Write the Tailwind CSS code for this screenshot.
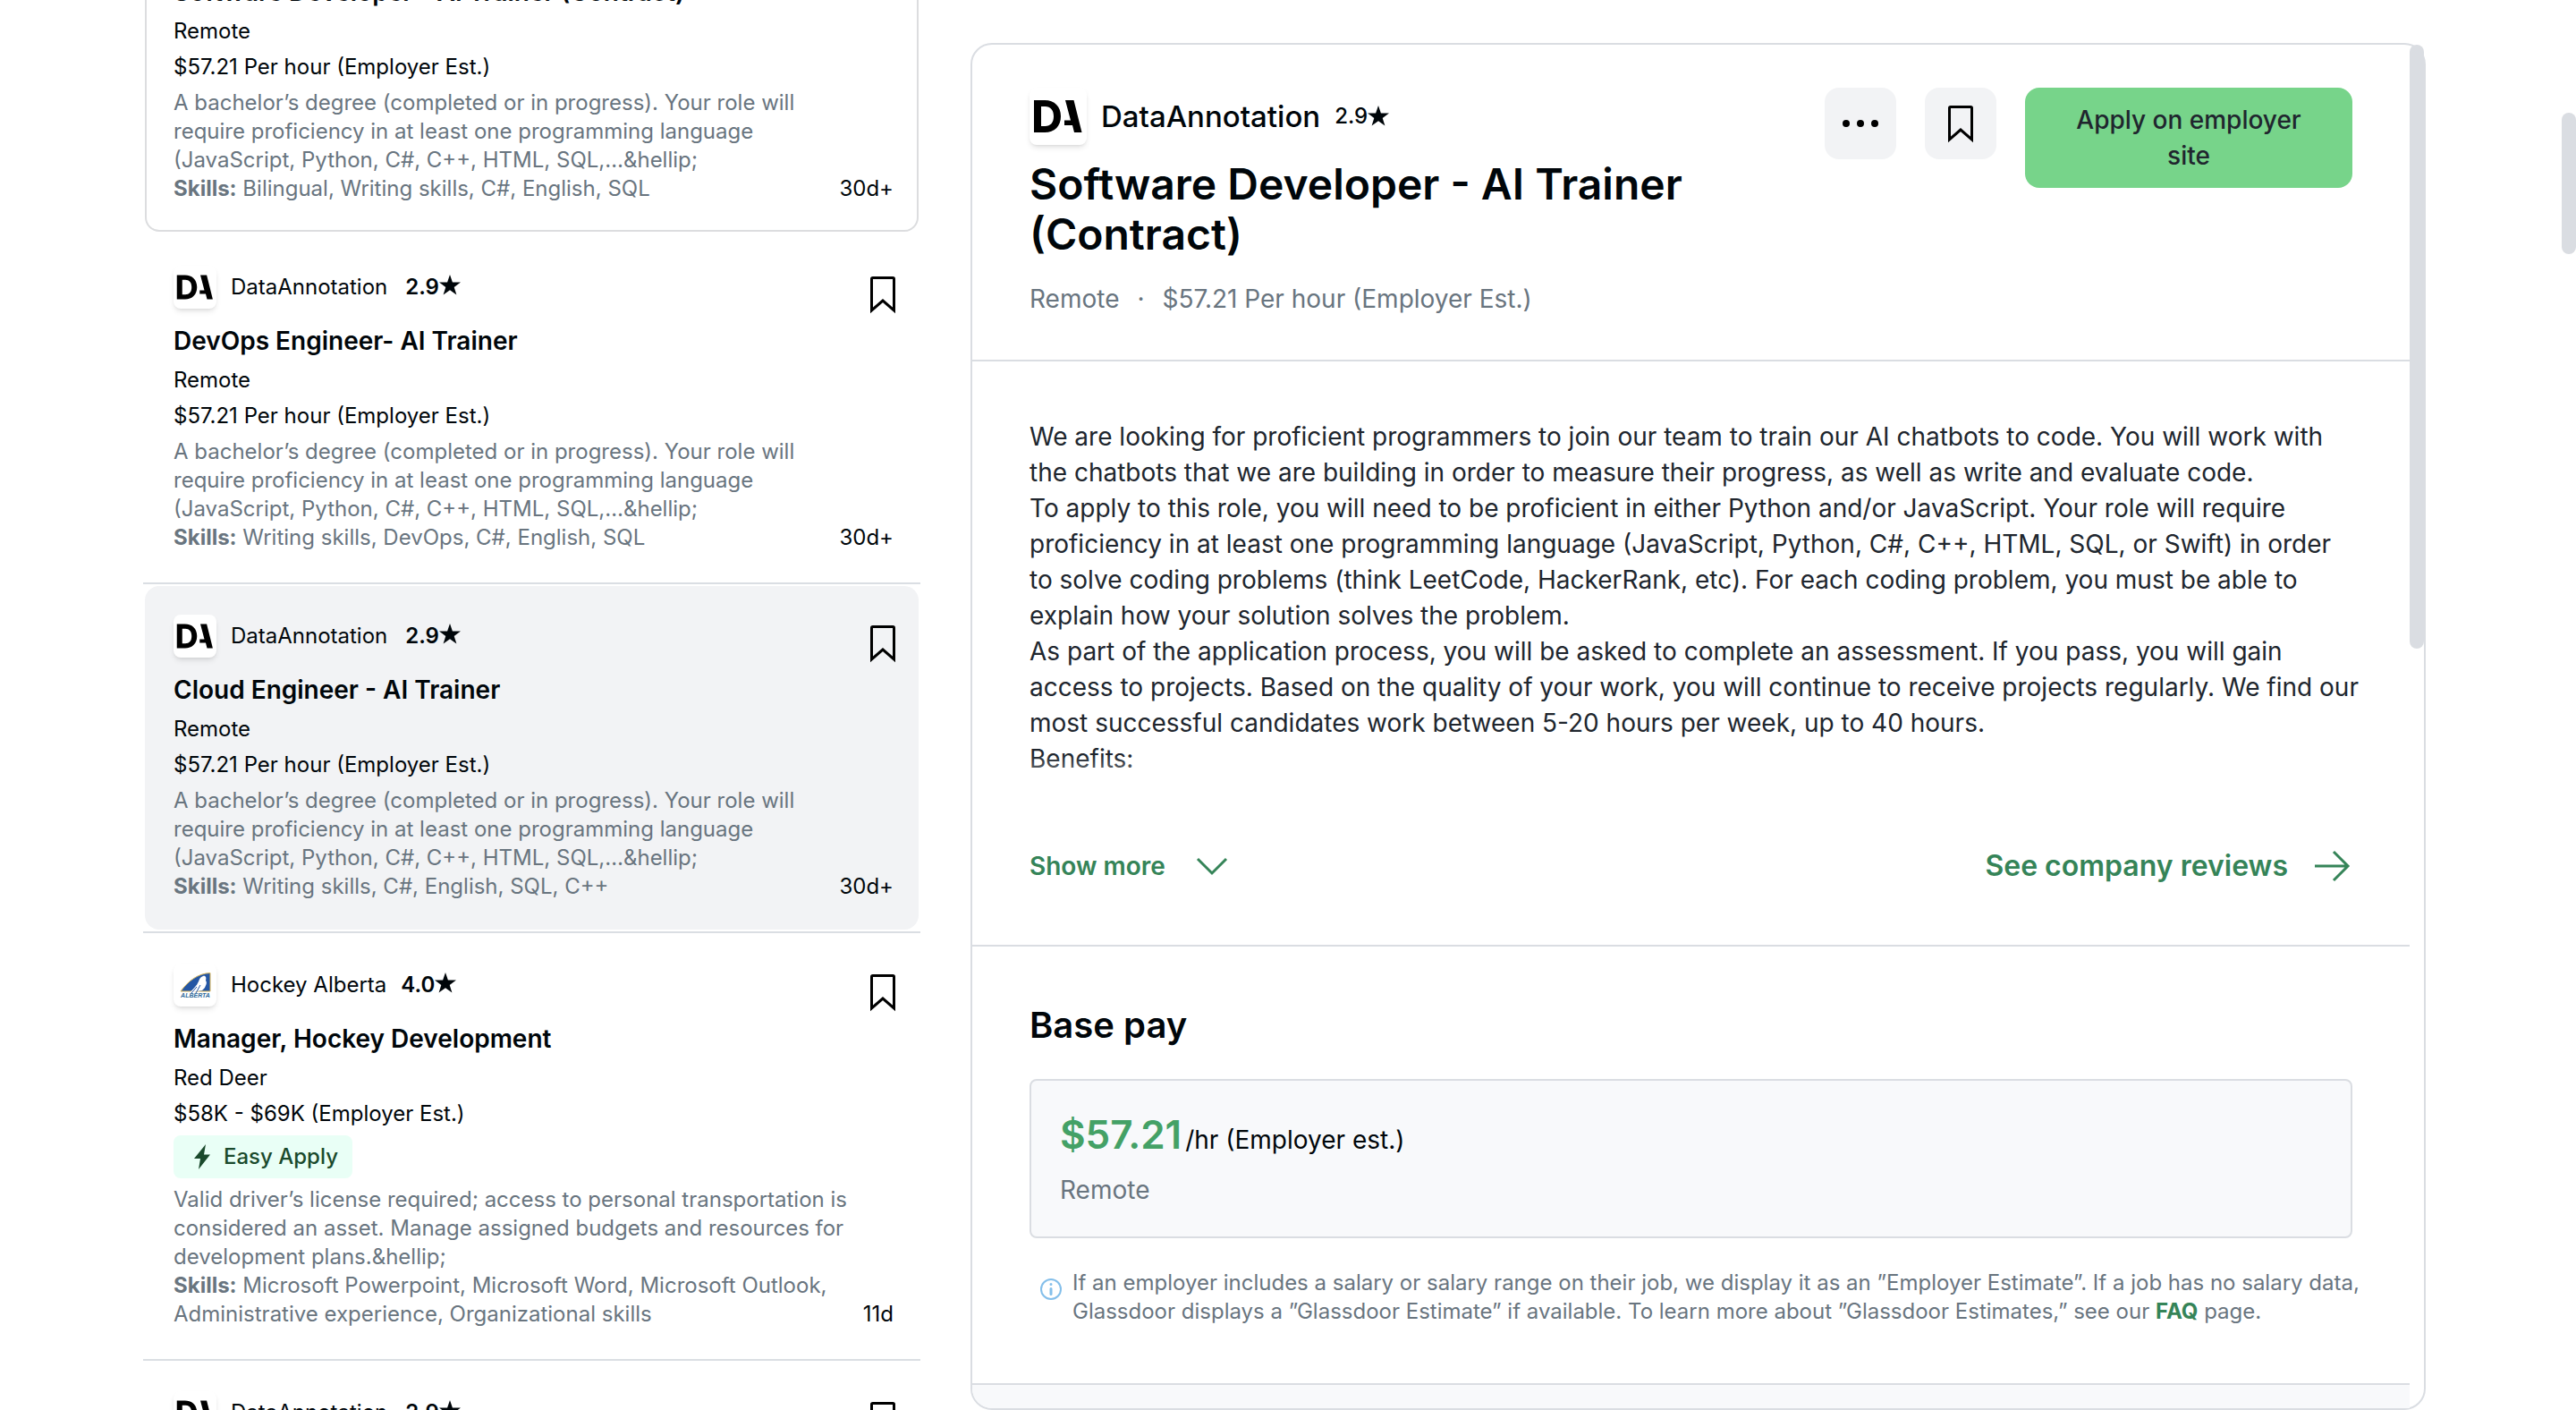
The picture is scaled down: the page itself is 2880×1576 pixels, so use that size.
<!DOCTYPE html>
<html lang="en">
<head>
<meta charset="utf-8">
<title>Software Developer - AI Trainer (Contract) | Jobs</title>
<script src="https://cdn.jsdelivr.net/npm/@tailwindcss/browser@4"></script>
</head>
<body class="h-screen overflow-hidden bg-white font-['Inter','Liberation_Sans',sans-serif] text-[24px] leading-8 text-[#00060a]">

<svg class="hidden" aria-hidden="true">
  <symbol id="da" viewBox="0 0 64 64">
    <path fill="#000" fill-rule="evenodd" d="M5 14h12c11 0 18 7 18 18s-7 18-18 18H5zM13 21v22h4.500c6 0 9.500-4 9.500-11s-3.500-11-9.500-11z"/>
    <path fill="#000" d="M40 14h9.500l9 36H50l-2-8h-9v-5.500h7z"/>
  </symbol>
  <symbol id="hockey" viewBox="0 0 48 48">
    <path fill="#2456a4" stroke="#d9b65c" stroke-width="1" d="M8 31C16 20 27 11 41 10.500V31z"/>
    <path fill="#fff" d="M33 14c3-1 4 2 3 5 2 3 0 5-1 8l-3 3-6 1-8 2c4-5 8-8 10-13 1-3 2-5 5-6z"/>
    <path fill="none" stroke="#2456a4" stroke-width="1" d="M20 33l6-7M25 33l5-9"/>
    <text x="24.500" y="37.500" text-anchor="middle" font-family="Liberation Sans" font-weight="700" font-style="italic" font-size="7" fill="#2f6a9a">ALBERTA</text>
  </symbol>
  <symbol id="bookmark" viewBox="0 0 24 24">
    <path fill="none" stroke="#000" stroke-width="1.500" d="M5.750 3.400Q5.750 2.750 6.400 2.750H17.600Q18.250 2.750 18.250 3.400V21L12 15.500L5.750 21z"/>
  </symbol>
  <symbol id="star" viewBox="0 0 24 24">
    <path fill="#00060a" d="M12 0l2.900 8.600H24l-7.300 5.300L19.400 22.500 12 17.200l-7.400 5.300 2.700-8.600L0 8.600h9.100z"/>
  </symbol>
</svg>

<div class="grid h-full grid-cols-[869px_1fr] gap-14 pr-[168px] pl-40">

  <section aria-label="Job results" class="overflow-hidden">
    <ul class="-mt-[125px]">
      <li>
        <article class="mx-0.5 rounded-2xl border-2 border-[#dcdddf] pt-[30px] pr-3.5 pb-[30px] pl-[30px]">
          <div class="flex h-12 items-start">
            <div class="flex flex-1 items-center gap-4">
              <svg class="size-12 rounded-lg bg-white shadow-md"><use href="#da"/></svg>
              <span>DataAnnotation</span>
              <span class="ml-1 flex items-center font-semibold">2.9<svg class="mb-1 size-6"><use href="#star"/></svg></span>
            </div>
            <button aria-label="Save job" class="mt-2"><svg class="size-12"><use href="#bookmark"/></svg></button>
          </div>
          <h3 class="mt-4 text-[28px] leading-10 font-semibold"><a href="#">Software Developer - AI Trainer (Contract)</a></h3>
          <p class="mt-2">Remote</p>
          <p class="mt-2">$57.21 Per hour (Employer Est.)</p>
          <div class="mt-2 flex items-end justify-between pr-3">
            <div class="w-[736px] text-[#69757f]">
              <p>A bachelor’s degree (completed or in progress). Your role will require proficiency in at least one programming language (JavaScript, Python, C#, C++, HTML, SQL,…&amp;hellip;</p>
              <p><b>Skills:</b> Bilingual, Writing skills, C#, English, SQL</p>
            </div>
            <span>30d+</span>
          </div>
        </article>
      </li>

      <li class="mt-1.5">
        <article class="mx-0.5 mb-0.5 rounded-2xl py-8 pr-4 pl-8">
          <div class="flex h-12 items-start">
            <div class="flex flex-1 items-center gap-4">
              <svg class="size-12 rounded-lg bg-white shadow-md"><use href="#da"/></svg>
              <span>DataAnnotation</span>
              <span class="ml-1 flex items-center font-semibold">2.9<svg class="mb-1 size-6"><use href="#star"/></svg></span>
            </div>
            <button aria-label="Save job" class="mt-2"><svg class="size-12"><use href="#bookmark"/></svg></button>
          </div>
          <h3 class="mt-4 text-[28px] leading-10 font-semibold"><a href="#">DevOps Engineer- AI Trainer</a></h3>
          <p class="mt-2">Remote</p>
          <p class="mt-2">$57.21 Per hour (Employer Est.)</p>
          <div class="mt-2 flex items-end justify-between pr-3">
            <div class="w-[736px] text-[#69757f]">
              <p>A bachelor’s degree (completed or in progress). Your role will require proficiency in at least one programming language (JavaScript, Python, C#, C++, HTML, SQL,…&amp;hellip;</p>
              <p><b>Skills:</b> Writing skills, DevOps, C#, English, SQL</p>
            </div>
            <span>30d+</span>
          </div>
        </article>
      </li>

      <li class="border-t-2 border-[#dadee3] py-0.5">
        <article class="mx-0.5 rounded-2xl bg-[#f2f3f5] py-8 pr-4 pl-8">
          <div class="flex h-12 items-start">
            <div class="flex flex-1 items-center gap-4">
              <svg class="size-12 rounded-lg bg-white shadow-md"><use href="#da"/></svg>
              <span>DataAnnotation</span>
              <span class="ml-1 flex items-center font-semibold">2.9<svg class="mb-1 size-6"><use href="#star"/></svg></span>
            </div>
            <button aria-label="Save job" class="mt-2"><svg class="size-12"><use href="#bookmark"/></svg></button>
          </div>
          <h3 class="mt-4 text-[28px] leading-10 font-semibold"><a href="#">Cloud Engineer - AI Trainer</a></h3>
          <p class="mt-2">Remote</p>
          <p class="mt-2">$57.21 Per hour (Employer Est.)</p>
          <div class="mt-2 flex items-end justify-between pr-3">
            <div class="w-[736px] text-[#69757f]">
              <p>A bachelor’s degree (completed or in progress). Your role will require proficiency in at least one programming language (JavaScript, Python, C#, C++, HTML, SQL,…&amp;hellip;</p>
              <p><b>Skills:</b> Writing skills, C#, English, SQL, C++</p>
            </div>
            <span>30d+</span>
          </div>
        </article>
      </li>

      <li class="border-t-2 border-[#dadee3] py-0.5">
        <article class="mx-0.5 rounded-2xl py-8 pr-4 pl-8">
          <div class="flex h-12 items-start">
            <div class="flex flex-1 items-center gap-4">
              <svg class="size-12 rounded-lg bg-white shadow-md"><use href="#hockey"/></svg>
              <span>Hockey Alberta</span>
              <span class="flex items-center font-semibold">4.0<svg class="mb-1 size-6"><use href="#star"/></svg></span>
            </div>
            <button aria-label="Save job" class="mt-2"><svg class="size-12"><use href="#bookmark"/></svg></button>
          </div>
          <h3 class="mt-4 text-[28px] leading-10 font-semibold"><a href="#">Manager, Hockey Development</a></h3>
          <p class="mt-2">Red Deer</p>
          <p class="mt-2">$58K - $69K (Employer Est.)</p>
          <div class="mt-2 flex h-12 w-fit items-center gap-2 rounded-lg bg-[#e9fff6] px-4 font-medium text-[#1a4a2c]">
            <svg class="size-8" viewBox="0 0 32 32"><path fill="#1a4a2c" d="M20 2L7 18h7l-2 12L25 13.500h-7z"/></svg>
            Easy Apply
          </div>
          <div class="mt-2 flex items-end justify-between pr-3">
            <div class="w-[760px] text-[#69757f]">
              <p>Valid driver’s license required; access to personal transportation is considered an asset. Manage assigned budgets and resources for development plans.&amp;hellip;</p>
              <p><b>Skills:</b> Microsoft Powerpoint, Microsoft Word, Microsoft Outlook, Administrative experience, Organizational skills</p>
            </div>
            <span>11d</span>
          </div>
        </article>
      </li>

      <li class="border-t-2 border-[#dadee3] py-0.5">
        <article class="mx-0.5 rounded-2xl py-8 pr-4 pl-8">
          <div class="flex h-12 items-start">
            <div class="flex flex-1 items-center gap-4">
              <svg class="size-12 rounded-lg bg-white shadow-md"><use href="#da"/></svg>
              <span>DataAnnotation</span>
              <span class="ml-1 flex items-center font-semibold">2.9<svg class="mb-1 size-6"><use href="#star"/></svg></span>
            </div>
            <button aria-label="Save job" class="mt-2"><svg class="size-12"><use href="#bookmark"/></svg></button>
          </div>
        </article>
      </li>
    </ul>
  </section>

  <main class="min-w-0 pt-12">
    <div class="relative flex h-full flex-col rounded-3xl border-2 border-[#dadde2] pr-4">
      <div class="absolute top-0 right-0 h-[675px] w-4 rounded-full bg-[#dadde2]"></div>

      <header class="flex items-start gap-8 border-b-2 border-[#dadde2] px-16 py-12">
        <div class="flex-1">
          <div class="flex items-center gap-4">
            <svg class="size-16 rounded-lg bg-white shadow-md"><use href="#da"/></svg>
            <span class="text-[33px] font-medium">DataAnnotation</span>
            <span class="flex items-center font-medium">2.9<svg class="size-6"><use href="#star"/></svg></span>
          </div>
          <h1 class="mt-4 text-[48px] leading-14 font-semibold">Software Developer - AI Trainer (Contract)</h1>
          <p class="mt-6 flex gap-5 text-[28px] leading-10 text-[#69757f]"><span>Remote</span><span>·</span><span>$57.21 Per hour (Employer Est.)</span></p>
        </div>
        <button aria-label="More options" class="flex size-20 items-center justify-center rounded-2xl bg-[#f2f3f5]">
          <svg class="size-12" viewBox="0 0 48 48"><circle cx="8" cy="24" r="4"/><circle cx="24" cy="24" r="4"/><circle cx="40" cy="24" r="4"/></svg>
        </button>
        <button aria-label="Save job" class="flex size-20 items-center justify-center rounded-2xl bg-[#f2f3f5]">
          <svg class="size-12"><use href="#bookmark"/></svg>
        </button>
        <button class="h-28 w-[366px] rounded-2xl bg-[#77d48a] px-12 text-[28px] leading-10 font-medium text-[#20262e]">Apply on employer site</button>
      </header>

      <section class="border-b-2 border-[#dadde2] p-16">
        <div class="relative text-[28px] leading-10 text-[#20262e]">
          <p>We are looking for proficient programmers to join our team to train our AI chatbots to code. You will work with the chatbots that we are building in order to measure their progress, as well as write and evaluate code.</p>
          <p>To apply to this role, you will need to be proficient in either Python and/or JavaScript. Your role will require proficiency in at least one programming language (JavaScript, Python, C#, C++, HTML, SQL, or Swift) in order to solve coding problems (think LeetCode, HackerRank, etc). For each coding problem, you must be able to explain how your solution solves the problem.</p>
          <p class="-mr-4">As part of the application process, you will be asked to complete an assessment. If you pass, you will gain access to projects. Based on the quality of your work, you will continue to receive projects regularly. We find our most successful candidates work between 5-20 hours per week, up to 40 hours.</p>
          <p>Benefits:</p>
          <div class="absolute inset-x-0 bottom-0 h-6 bg-linear-to-b from-white/0 to-white/40"></div>
        </div>
        <div class="mt-[76px] flex h-12 items-center justify-between font-semibold text-[#358458]">
          <button class="flex items-center gap-7 text-[28px]">Show more
            <svg class="size-12" viewBox="0 0 48 48" fill="none" stroke="#358458" stroke-width="3"><path d="M8 16l16 16 16-16"/></svg>
          </button>
          <a href="#" class="flex items-center gap-6 text-[32px]">See company reviews
            <svg class="size-12" viewBox="0 0 48 48" fill="none" stroke="#358458" stroke-width="3"><path d="M6 24h36M27 8l16 16-16 16"/></svg>
          </a>
        </div>
      </section>

      <section class="border-b-2 border-[#dadde2] p-16">
        <h2 class="text-[40px] leading-12 font-semibold">Base pay</h2>
        <div class="mt-9 rounded-lg border-2 border-[#dadde2] bg-[#f8f9fb] px-8 pt-7 pb-8">
          <p class="flex items-baseline gap-1 text-[28px]"><span class="text-[44px] leading-16 font-semibold text-[#44a166]">$57.21</span>/hr (Employer est.)</p>
          <p class="mt-2.5 text-[28px] leading-10 text-[#69757f]">Remote</p>
        </div>
        <div class="mt-[34px] -mr-4 flex gap-2 pl-2 text-[#69757f]">
          <svg class="mt-1.5 size-8 shrink-0" viewBox="0 0 32 32" fill="none" stroke="#84bfea" stroke-width="2"><circle cx="16" cy="17" r="11"/><path stroke-width="3" stroke-linecap="round" d="M16 16.500v6M16 11.500v.1"/></svg>
          <p>If an employer includes a salary or salary range on their job, we display it as an ”Employer Estimate”. If a job has no salary data, Glassdoor displays a ”Glassdoor Estimate” if available. To learn more about ”Glassdoor Estimates,” see our <a href="#" class="font-bold text-[#358458]">FAQ</a> page.</p>
        </div>
      </section>

      <div class="flex-1 rounded-bl-[22px] bg-[#f8f9fb]"></div>
    </div>
  </main>
</div>

<div class="fixed top-[126px] right-0 h-[158px] w-4 rounded-full bg-[#dadde2]"></div>
</body>
</html>
